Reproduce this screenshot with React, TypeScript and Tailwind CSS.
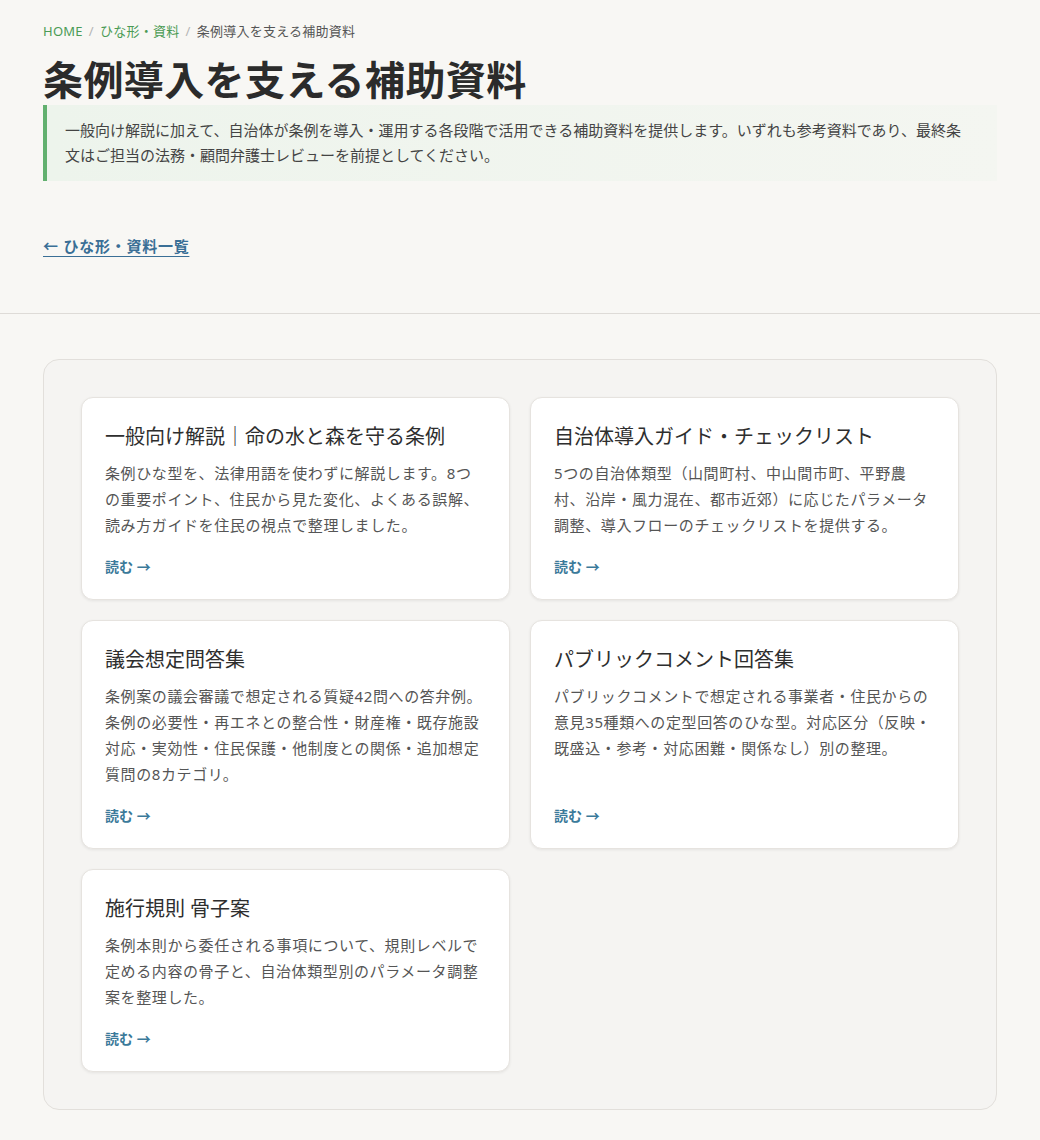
import React from "react";

const cards = [
  {
    title: "一般向け解説｜命の水と森を守る条例",
    body: "条例ひな型を、法律用語を使わずに解説します。8つの重要ポイント、住民から見た変化、よくある誤解、読み方ガイドを住民の視点で整理しました。",
  },
  {
    title: "自治体導入ガイド・チェックリスト",
    body: "5つの自治体類型（山間町村、中山間市町、平野農村、沿岸・風力混在、都市近郊）に応じたパラメータ調整、導入フローのチェックリストを提供する。",
  },
  {
    title: "議会想定問答集",
    body: "条例案の議会審議で想定される質疑42問への答弁例。条例の必要性・再エネとの整合性・財産権・既存施設対応・実効性・住民保護・他制度との関係・追加想定質問の8カテゴリ。",
  },
  {
    title: "パブリックコメント回答集",
    body: "パブリックコメントで想定される事業者・住民からの意見35種類への定型回答のひな型。対応区分（反映・既盛込・参考・対応困難・関係なし）別の整理。",
  },
  {
    title: "施行規則 骨子案",
    body: "条例本則から委任される事項について、規則レベルで定める内容の骨子と、自治体類型別のパラメータ調整案を整理した。",
  },
];

function Card({ title, body }: { title: string; body: string }) {
  return (
    <a
      href="#"
      className="flex flex-col rounded-[12px] border border-[#e6e3df] bg-white px-[23px] pt-[24px] pb-[22px] shadow-[0_1px_3px_rgba(0,0,0,0.07)]"
    >
      <h3 className="font-['Liberation_Serif','Noto_Sans_CJK_JP',serif] text-[20px] leading-[30px] font-normal text-[#2e2e2e]">
        {title}
      </h3>
      <p className="mt-[8px] mb-[19px] text-[15px] leading-[26px] tracking-[0.04em] text-[#555]">
        {body}
      </p>
      <span className="mt-auto text-[14px] leading-[20px] font-bold text-[#3b7a9a]">
        読む →
      </span>
    </a>
  );
}

export default function App() {
  return (
    <div className="min-h-[1140px] bg-[#f8f7f4] font-['Noto_Sans','Noto_Sans_CJK_JP',sans-serif] text-[#333]">
      <section className="px-[43px] pt-[21px] pb-[55px]">
        <nav className="flex items-center gap-[6px] text-[13px] leading-[20px] tracking-[0.02em]">
          <a href="#" className="text-[#4b9b55]">HOME</a>
          <span className="text-[#b5b5b5]">/</span>
          <a href="#" className="text-[#4b9b55]">ひな形・資料</a>
          <span className="text-[#b5b5b5]">/</span>
          <span className="text-[#555]">条例導入を支える補助資料</span>
        </nav>
        <h1 className="mt-[18px] font-['Liberation_Serif','Noto_Sans_CJK_JP',serif] text-[40px] leading-[46px] font-bold tracking-[0.01em] text-[#2b2b2b]">
          条例導入を支える補助資料
        </h1>
        <div className="border-l-4 border-[#62b06f] bg-gradient-to-r from-[#edf4ec] to-[#f4f6f1] py-[13px] pr-[30px] pl-[18px]">
          <p className="text-[15px] leading-[25px] text-[#444]">
            一般向け解説に加えて、自治体が条例を導入・運用する各段階で活用できる補助資料を提供します。いずれも参考資料であり、最終条文はご担当の法務・顧問弁護士レビューを前提としてください。
          </p>
        </div>
        <a
          href="#"
          className="mt-[55px] inline-block text-[15px] leading-[20px] font-bold tracking-[0.05em] text-[#3a6f96] underline underline-offset-[4px]"
        >
          ← ひな形・資料一覧
        </a>
      </section>

      <div className="border-t border-[#dedbd7] px-[43px] pt-[45px] pb-[32px]">
        <div className="rounded-[16px] border border-[#e2dfdb] bg-[#f5f4f2] p-[37px]">
          <div className="grid grid-cols-2 gap-[20px]">
            {cards.map((c) => (
              <Card key={c.title} title={c.title} body={c.body} />
            ))}
          </div>
        </div>
      </div>
    </div>
  );
}
